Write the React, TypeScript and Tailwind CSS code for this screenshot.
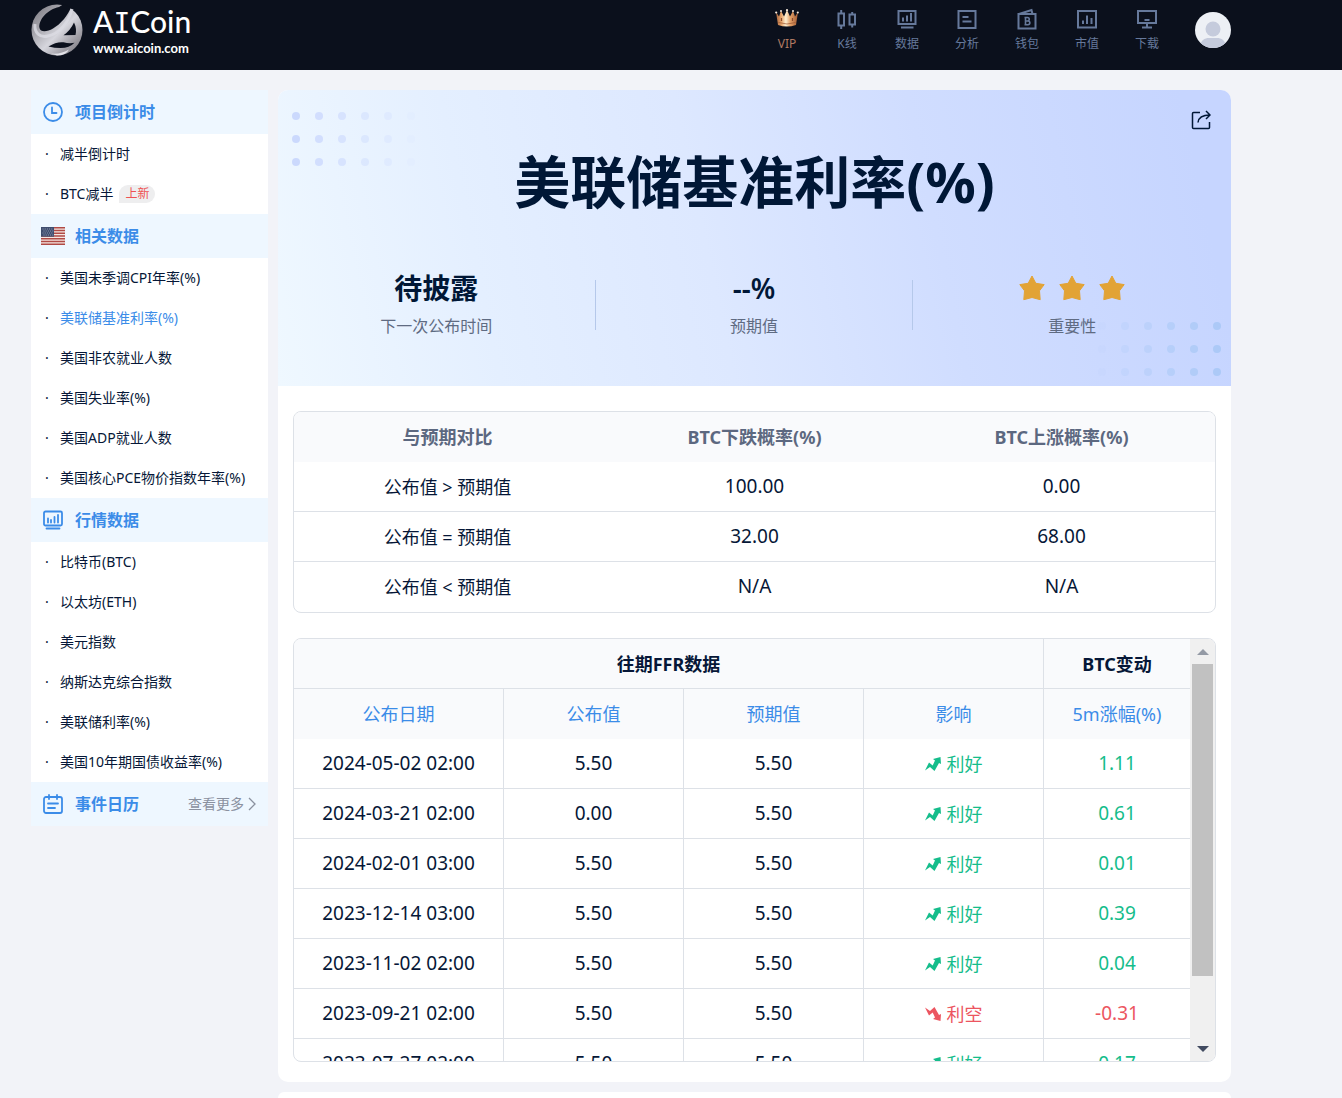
import { useRef } from 'react';
import type { ReactNode } from 'react';
import clsx from 'clsx';

const navItems = [
  { label: 'VIP', icon: <CrownIcon /> },
  {
    label: 'K线',
    icon: (
      <NavIcon>
        <path d="M1.500 4.500h5.500v12H1.500zM12.500 5.500H18v10h-5.500zM4.200 1v3.500M4.200 16.500V20M15.200 3v2.500M15.200 15.500V18.500" />
      </NavIcon>
    ),
  },
  {
    label: '数据',
    icon: (
      <NavIcon>
        <path d="M1.500 2h17v13h-17zM4 18.500h12.500M6 8.500v4M10 6.500v6M14 4v8.500" />
      </NavIcon>
    ),
  },
  {
    label: '分析',
    icon: (
      <NavIcon>
        <path d="M1.500 2h17v17h-17zM5.500 8h6M5.500 12.500h9" />
      </NavIcon>
    ),
  },
  {
    label: '钱包',
    icon: (
      <NavIcon>
        <path d="M1.500 5h17v14.500h-17zM2 5l12.500-4 1 4" />
        <path d="M7.500 8.500h3a1.700 1.700 0 0 1 0 3.500h-2h2.500a1.800 1.800 0 0 1 0 3.700H7.500M8.500 8.500v7" strokeWidth="1.600" />
      </NavIcon>
    ),
  },
  {
    label: '市值',
    icon: (
      <NavIcon>
        <path d="M1 2h18v16.500H1zM6 11.500V15M10 6.500V15M14.500 9v6" />
      </NavIcon>
    ),
  },
  {
    label: '下载',
    icon: (
      <NavIcon>
        <path d="M1 2h18v12H1zM10 14v4.500M5 18.500h10M7.500 11h5" />
      </NavIcon>
    ),
  },
];

const sections = [
  {
    title: '项目倒计时',
    icon: (
      <SideIcon>
        <circle cx="10" cy="10" r="9" />
        <path d="M9 5.500V11h4.500" />
      </SideIcon>
    ),
    items: ['减半倒计时', 'BTC减半'],
  },
  {
    title: '相关数据',
    icon: <FlagIcon />,
    items: [
      '美国未季调CPI年率(%)',
      '美联储基准利率(%)',
      '美国非农就业人数',
      '美国失业率(%)',
      '美国ADP就业人数',
      '美国核心PCE物价指数年率(%)',
    ],
  },
  {
    title: '行情数据',
    icon: (
      <SideIcon>
        <rect x="1" y="1.500" width="18" height="14" rx="1.500" />
        <path d="M3.500 18.500h13M5 8.500v4M8 10v2.500M11.500 7v5.500M15 5v7.500" />
      </SideIcon>
    ),
    items: [
      '比特币(BTC)',
      '以太坊(ETH)',
      '美元指数',
      '纳斯达克综合指数',
      '美联储利率(%)',
      '美国10年期国债收益率(%)',
    ],
  },
];

const compareRows = [
  ['公布值 > 预期值', '100.00', '0.00'],
  ['公布值 = 预期值', '32.00', '68.00'],
  ['公布值 < 预期值', 'N/A', 'N/A'],
];

const history = [
  { date: '2024-05-02 02:00', actual: '5.50', forecast: '5.50', up: true, change: '1.11' },
  { date: '2024-03-21 02:00', actual: '0.00', forecast: '5.50', up: true, change: '0.61' },
  { date: '2024-02-01 03:00', actual: '5.50', forecast: '5.50', up: true, change: '0.01' },
  { date: '2023-12-14 03:00', actual: '5.50', forecast: '5.50', up: true, change: '0.39' },
  { date: '2023-11-02 02:00', actual: '5.50', forecast: '5.50', up: true, change: '0.04' },
  { date: '2023-09-21 02:00', actual: '5.50', forecast: '5.50', up: false, change: '-0.31' },
  { date: '2023-07-27 02:00', actual: '5.50', forecast: '5.50', up: true, change: '0.17' },
];

function NavIcon({ children }: { children: ReactNode }) {
  return (
    <svg viewBox="0 0 20 20" className="w-5 h-5 overflow-visible" fill="none" stroke="currentColor" strokeWidth="2">
      {children}
    </svg>
  );
}

function SideIcon({ children }: { children: ReactNode }) {
  return (
    <svg viewBox="0 0 20 20" className="w-5 h-5" fill="none" stroke="currentColor" strokeWidth="1.800" strokeLinecap="round">
      {children}
    </svg>
  );
}

function CrownIcon() {
  return (
    <svg viewBox="0 0 24 20" className="w-6 h-5">
      <defs>
        <linearGradient id="crown" x1="0" x2="1">
          <stop offset="0" stopColor="#a8643c" />
          <stop offset="0.250" stopColor="#e8a66c" />
          <stop offset="0.450" stopColor="#fff0d2" />
          <stop offset="0.650" stopColor="#e3a067" />
          <stop offset="1" stopColor="#a35b33" />
        </linearGradient>
      </defs>
      <path d="M1 3l3 4.500L6 2l3 5.500L12 1l3 6.500L18 2l2 5.500L23 3l-2 13q-9 3-18 0z" fill="url(#crown)" />
      <path d="M3.500 13.500q8.500 3 17 0" fill="none" stroke="#9a5430" strokeWidth="0.700" />
      <path d="M6.500 9v3M17.500 9v3" stroke="#8b4a2b" strokeWidth="1.200" />
      <g fill="#f7eadc">
        <circle cx="1.200" cy="3.500" r="1.100" />
        <circle cx="6" cy="2" r="1" />
        <circle cx="12" cy="1.200" r="1.100" />
        <circle cx="18" cy="2" r="1" />
        <circle cx="22.800" cy="3.500" r="1.100" />
      </g>
    </svg>
  );
}

function FlagIcon() {
  return (
    <svg viewBox="0 0 24 18" className="w-6 h-[18px]">
      <path d="M0 0h24v18H0z" fill="#f4e6e2" />
      <path
        d="M0 .7h24M0 3.500h24M0 6.200h24M0 9h24M0 11.800h24M0 14.500h24M0 17.300h24"
        stroke="#b04a45"
        strokeWidth="1.400"
      />
      <path d="M0 0h13v9.700H0z" fill="#3f4d6e" />
      <path d="M1.500 2h11M2.500 4h10M1.500 6h11M2.500 8h10" stroke="#a9b2c6" strokeWidth="0.800" strokeDasharray="1 1.200" />
    </svg>
  );
}

function LogoMark() {
  return (
    <svg viewBox="0 0 52 52" className="w-[52px] h-[52px]">
      <defs>
        <linearGradient id="silver" x1="0" y1="0" x2="1" y2="1">
          <stop offset="0" stopColor="#77757c" />
          <stop offset="0.300" stopColor="#a5a4ab" />
          <stop offset="0.550" stopColor="#d6d6dd" />
          <stop offset="0.750" stopColor="#a3a1a8" />
          <stop offset="1" stopColor="#716f76" />
        </linearGradient>
      </defs>
      <circle cx="26" cy="26" r="25.500" fill="url(#silver)" />
      <path d="M8.500 24C7 16 17 5 28 3L32 .5q4 0 8 3C37 11 30 20 22 24.500c-6 3.500-12.500 4-13.500-.5z" fill="#0b101c" />
      <path d="M4 20c-1 9 5 14 13 12C28 30 38 18 41 5" fill="none" stroke="#dcdce3" strokeWidth="3" opacity="0.800" />
      <path d="M43 18.500q3 6 1.500 12.500l-12 .3q7-5 10.500-12.800z" fill="#0b101c" />
      <path d="M17.500 42.500q8-5 15-4.200 6 1.500 11 .4-5 5.300-14 5.300-6 0-12-1.500z" fill="#0b101c" />
      <path d="M20 49.500q10 1 18-4-3 6-12 6z" fill="#e2e2e8" />
    </svg>
  );
}

function StarIcon() {
  return (
    <svg viewBox="0 0 26 26" className="w-[26px] h-[26px]">
      <path
        d="M13 1l3.800 7.300 8.400 1.300-4.700 6.200.7 8.900L13 22.500l-8.200 2.200.7-8.900L.8 9.600l8.400-1.300z"
        fill="#e2a336"
        stroke="#e2a336"
        strokeLinejoin="round"
      />
    </svg>
  );
}

function TrendIcon({ up }: { up: boolean }) {
  return (
    <svg viewBox="0 0 16 16" className={clsx('w-4 h-4', !up && '-scale-y-100')} fill="currentColor">
      <path d="M0 14.500L4 6.500l3.700 3L10 4.500 8 3l7.500-2 .5 7-2-1L9.500 15 5 11z" />
    </svg>
  );
}

function DotGrid({ color, reverse }: { color: string; reverse?: boolean }) {
  const cells = Array.from({ length: 18 }, (_, i) => ({ col: i % 6, row: Math.floor(i / 6) }));
  return (
    <svg viewBox="0 0 123 54" className="w-[123px] h-[54px]" fill={color}>
      {cells.map(({ col, row }) => (
        <circle
          key={`${col}-${row}`}
          cx={4 + col * 23}
          cy={4 + row * 23}
          r="4"
          opacity={(reverse ? col + 1 : 6 - col) / 6 - 0.1}
        />
      ))}
    </svg>
  );
}

function Header() {
  return (
    <header className="h-[70px] shrink-0 bg-[#0b101c]">
      <div className="ml-[31px] mr-4 max-w-[1200px] flex items-start justify-between">
        <a href="#" className="flex items-center gap-[10px] pt-1 text-white font-[Lato,sans-serif]">
          <LogoMark />
          <span className="flex flex-col">
            <span className="text-[30px] leading-8 font-medium">
              A<span className="font-['DejaVu_Sans_Mono',monospace] text-[28px]">I</span>Coin
            </span>
            <span className="text-[13px] leading-4 font-bold">www.aicoin.com</span>
          </span>
        </a>
        <div className="flex items-start gap-[18px]">
          <nav className="flex pt-[9px]">
            {navItems.map((item, index) => (
              <a
                key={item.label}
                href="#"
                className={clsx(
                  'w-[60px] flex flex-col items-center gap-[6px] text-xs leading-[18px]',
                  index === 0 ? 'text-[#b07a62]' : 'text-[#66799b]'
                )}
              >
                {item.icon}
                {item.label}
              </a>
            ))}
          </nav>
          <button type="button" aria-label="账户" className="mt-3 w-9 h-9 rounded-full overflow-hidden">
            <svg viewBox="0 0 36 36" className="w-9 h-9">
              <path d="M0 0h36v36H0z" fill="#edf0f5" />
              <circle cx="18" cy="17" r="7.500" fill="#c5cbdc" />
              <path d="M5 36c0-8 5-10 9-10h8c4 0 9 2 9 10z" fill="#c5cbdc" />
            </svg>
          </button>
        </div>
      </div>
    </header>
  );
}

function Sidebar() {
  return (
    <aside className="w-[237px] shrink-0 self-start bg-white text-sm text-[#061737]">
      {sections.map((section) => (
        <section key={section.title}>
          <SectionTitle icon={section.icon} title={section.title} />
          <ul>
            {section.items.map((item) => (
              <li key={item} className={clsx('h-10 flex items-center pl-[14px]', item === '美联储基准利率(%)' && 'text-[#3b8ce8]')}>
                <span className="w-[15px] text-[#061737]">·</span>
                <a href="#">{item}</a>
                {item === 'BTC减半' && (
                  <span className="ml-[6px] px-[6px] rounded-full rounded-bl-none bg-[#eeeeef] text-xs leading-[18px] text-[#ee5253]">
                    上新
                  </span>
                )}
              </li>
            ))}
          </ul>
        </section>
      ))}
      <SectionTitle
        title="事件日历"
        icon={
          <SideIcon>
            <rect x="1" y="3" width="18" height="16" rx="2" />
            <path d="M6 1v4M14 1v4M5 9.500h10M5 14h7" />
          </SideIcon>
        }
      >
        <a href="#" className="ml-auto flex items-center gap-1 text-sm text-[#8a919f]">
          查看更多
          <svg viewBox="0 0 8 14" className="w-2 h-[14px]" fill="none" stroke="currentColor" strokeWidth="1.300">
            <path d="M1 1l6 6-6 6" />
          </svg>
        </a>
      </SectionTitle>
    </aside>
  );
}

function SectionTitle({ icon, title, children }: { icon: ReactNode; title: string; children?: ReactNode }) {
  return (
    <div className="h-11 flex items-center gap-[10px] pl-[10px] pr-3 bg-[#eef7ff] text-[#3b8ce8]">
      <span className="w-6 flex justify-center">{icon}</span>
      <h2 className="text-base font-bold">{title}</h2>
      {children}
    </div>
  );
}

function Hero() {
  return (
    <section className="relative h-[296px] rounded-t-[10px] bg-[linear-gradient(78deg,#eff8ff_0%,#e4efff_22%,#dde8ff_45%,#d0ddff_68%,#c6d5ff_95%)] text-[#001736]">
      <div className="absolute left-[14px] top-[22px]">
        <DotGrid color="#c8d6fd" />
      </div>
      <div className="absolute right-[10px] bottom-[10px]">
        <DotGrid color="#a9c8f6" reverse />
      </div>
      <button type="button" aria-label="分享" className="absolute right-5 top-5">
        <svg viewBox="0 0 20 20" className="w-5 h-5" fill="none" stroke="currentColor" strokeWidth="1.500">
          <path d="M9 2.500H2.500q-1 0-1 1v14q0 1 1 1h15q1 0 1-1V12" />
          <path d="M7 12.500c.5-5 4-7.500 12-7.500M15 1l4 4-4 4" />
        </svg>
      </button>

      <h1 className="pt-14 text-center text-[56px] leading-[70px] font-bold">美联储基准利率(%)</h1>
      <dl className="relative mt-[54px] grid grid-cols-3 text-center">
        <Stat label="下一次公布时间">待披露</Stat>
        <Stat label="预期值">--%</Stat>
        <Stat label="重要性">
          <span className="flex gap-[14px]">
            <StarIcon />
            <StarIcon />
            <StarIcon />
          </span>
        </Stat>
      </dl>
    </section>
  );
}

function Stat({ label, children }: { label: string; children: ReactNode }) {
  return (
    <div className="group flex items-center">
      <div className="flex-1 flex flex-col-reverse items-center">
        <dt className="mt-2 text-base leading-6 text-[#5f6b82]">{label}</dt>
        <dd className="h-9 flex items-center text-[28px] leading-9 font-semibold">{children}</dd>
      </div>
      <div className="w-px h-[50px] mt-[2px] bg-[#b5c8ea] group-last:hidden" />
    </div>
  );
}

function CompareTable() {
  return (
    <div className="border border-[#dde1e7] rounded-lg overflow-hidden">
      <table className="w-full table-fixed border-separate border-spacing-0 text-center text-lg [&_td]:border-b [&_td]:border-[#dde1e7] [&_tr:last-child>td]:border-b-0">
        <thead>
          <tr className="h-[50px] bg-[#f9fafc] text-[#5c6880]">
            <th>与预期对比</th>
            <th>BTC下跌概率(%)</th>
            <th>BTC上涨概率(%)</th>
          </tr>
        </thead>
        <tbody>
          {compareRows.map((row) => (
            <tr key={row[0]} className="h-[50px]">
              <td>{row[0]}</td>
              <td className="text-[19px]">{row[1]}</td>
              <td className="text-[19px]">{row[2]}</td>
            </tr>
          ))}
        </tbody>
      </table>
    </div>
  );
}

function HistoryTable() {
  const scroller = useRef<HTMLDivElement>(null);
  const scroll = (top: number) => scroller.current?.scrollBy({ top });

  return (
    <div className="h-[424px] flex border border-[#dde1e7] rounded-lg overflow-hidden">
      <div ref={scroller} className="flex-1 overflow-y-auto [scrollbar-width:none]">
        <table className="w-full table-fixed border-separate border-spacing-0 text-center text-lg [&_td]:border-b [&_td]:border-r [&_th]:border-r [&_td]:border-[#dde1e7] [&_th]:border-[#dde1e7] [&_tr>*:last-child]:border-r-0">
          <colgroup>
            <col className="w-[210px]" />
            <col className="w-[180px]" />
            <col className="w-[180px]" />
            <col className="w-[180px]" />
            <col />
          </colgroup>
          <thead className="bg-[#f9fafc]">
            <tr className="h-[50px]">
              <th colSpan={4} className="border-b">往期FFR数据</th>
              <th className="border-b">BTC变动</th>
            </tr>
            <tr className="h-[50px] text-[#3b8ce8] [&>th]:font-normal">
              <th>公布日期</th>
              <th>公布值</th>
              <th>预期值</th>
              <th>影响</th>
              <th>5m涨幅(%)</th>
            </tr>
          </thead>
          <tbody>
            {history.map((row) => (
              <tr key={row.date} className="h-[50px]">
                <td className="text-[19px]">{row.date}</td>
                <td className="text-[19px]">{row.actual}</td>
                <td className="text-[19px]">{row.forecast}</td>
                <td className={row.up ? 'text-[#15bd8b]' : 'text-[#ec5560]'}>
                  <span className="flex items-center justify-center gap-[6px]">
                    <TrendIcon up={row.up} />
                    {row.up ? '利好' : '利空'}
                  </span>
                </td>
                <td className={clsx('text-[19px]', row.up ? 'text-[#15bd8b]' : 'text-[#ec5560]')}>{row.change}</td>
              </tr>
            ))}
          </tbody>
        </table>
      </div>
      <div className="w-[25px] shrink-0 flex flex-col bg-[#f0f0f0]">
        <button type="button" aria-label="向上滚动" onClick={() => scroll(-50)} className="h-[25px] flex items-center justify-center">
          <svg viewBox="0 0 12 6" className="w-3 h-[6px]">
            <path d="M0 6l6-6 6 6z" fill="#949aa5" />
          </svg>
        </button>
        <div className="flex-1 px-[2px]">
          <div className="h-[84%] bg-[#c1c1c1]" />
        </div>
        <button type="button" aria-label="向下滚动" onClick={() => scroll(50)} className="h-[25px] flex items-center justify-center">
          <svg viewBox="0 0 12 6" className="w-3 h-[6px]">
            <path d="M0 0l6 6 6-6z" fill="#414b60" />
          </svg>
        </button>
      </div>
    </div>
  );
}

export default function App() {
  return (
    <div className="min-h-screen flex flex-col bg-[#f2f3f8] text-[#061737] font-['Noto_Sans','Noto_Sans_CJK_SC',sans-serif]">
      <Header />
      <div className="flex-1 ml-[31px] mr-4 max-w-[1200px] mt-5 flex gap-[10px]">
        <Sidebar />
        <main className="flex-1 flex flex-col gap-[10px]">
          <article className="bg-white rounded-[10px]">
            <Hero />
            <div className="px-[15px] pt-[25px] pb-5 flex flex-col gap-[25px]">
              <CompareTable />
              <HistoryTable />
            </div>
          </article>
          <section className="flex-1 bg-white rounded-t-[10px]" />
        </main>
      </div>
    </div>
  );
}
